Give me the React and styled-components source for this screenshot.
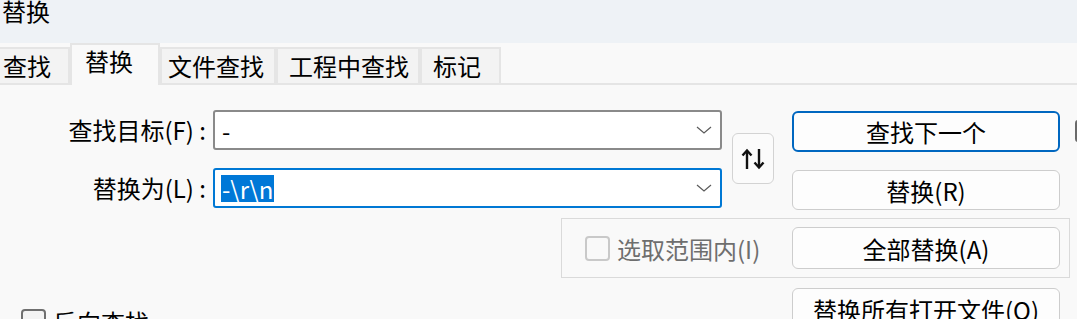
import React from 'react';
import styled, { createGlobalStyle } from 'styled-components';

const GlobalStyle = createGlobalStyle`
  html, body {
    margin: 0;
    padding: 0;
    background: #f9f9f9;
    overflow: hidden;
  }
  body {
    font-family: "Noto Sans CJK SC", "Noto Sans", sans-serif;
    font-size: 24px;
    color: #000;
  }
`;

const Window = styled.div`
  width: 1077px;
  height: 319px;
  overflow: hidden;
  background: #f9f9f9;
`;

const TitleBar = styled.div`
  height: 43px;
  background: #eef2f6;
  padding-left: 2px;
  line-height: 22px;
`;

const TabStrip = styled.div`
  height: 40px;
  display: flex;
  align-items: flex-end;
  border-bottom: 2px solid #e5e5e5;
`;

const Tab = styled.div`
  box-sizing: border-box;
  flex: none;
  width: ${p => p.$w}px;
  height: ${p => (p.$active ? 42 : 36)}px;
  margin-bottom: ${p => (p.$active ? -2 : 0)}px;
  padding-left: ${p => p.$pl}px;
  background: ${p => (p.$active ? '#f9f9f9' : '#f3f3f3')};
  border: 2px solid #e5e5e5;
  border-bottom: none;
  border-left-width: ${p => (p.$first ? 0 : 2)}px;
  line-height: ${p => (p.$active ? 32 : 34)}px;
  white-space: nowrap;
`;

const Panel = styled.div`
  padding-top: 25px;
`;

const TopRow = styled.div`
  display: flex;
  align-items: flex-start;
  & > * {
    flex: none;
  }
`;

const Fields = styled.div`
  display: grid;
  grid-template-columns: 213px 509px;
  grid-auto-rows: 40px;
  row-gap: 18px;
`;

const Label = styled.div`
  text-align: right;
  padding-right: 7px;
  line-height: 40px;
  white-space: nowrap;
`;

const Combo = styled.div`
  box-sizing: border-box;
  height: 40px;
  display: flex;
  align-items: center;
  padding: 0 8px 0 6px;
  background: #fff;
  border: 2px solid ${p => (p.$focused ? '#0078d4' : '#8a8a8a')};
  border-radius: 3px;
`;

const ComboText = styled.span`
  padding-left: 1px;
  line-height: 27px;
`;

const Selected = styled.span`
  background: #0078d7;
  color: #fff;
  line-height: 27px;
  padding: 0 1px;
`;

const Chevron = styled.svg`
  margin-left: auto;
  flex: none;
`;

const SwapButton = styled.div`
  box-sizing: border-box;
  width: 42px;
  height: 51px;
  margin: 23px 0 0 10px;
  display: flex;
  align-items: center;
  justify-content: center;
  background: #fbfbfb;
  border: 1px solid #d3d3d3;
  border-radius: 6px;
`;

const ButtonColumn = styled.div`
  display: flex;
  flex-direction: column;
  gap: 18px;
  margin: 1px 0 0 18px;
`;

const Button = styled.div`
  box-sizing: border-box;
  width: 268px;
  height: ${p => p.$h || 41}px;
  flex: none;
  background: #fdfdfd;
  border: ${p => (p.$default ? '2px solid #0067c0' : '1px solid #cdcdcd')};
  border-radius: 6px;
  display: flex;
  align-items: center;
  justify-content: center;
  white-space: nowrap;
`;

const EdgeBox = styled.div`
  box-sizing: border-box;
  width: 22px;
  height: 22px;
  margin: 10px 0 0 15px;
  border: 2px solid #6a6a6a;
  border-radius: 3px;
`;

const GroupBox = styled.div`
  box-sizing: border-box;
  width: 509px;
  height: 60px;
  margin: 8px 0 0 561px;
  padding: 0 9px 0 23px;
  display: flex;
  align-items: center;
  border: 1px solid #dadada;
`;

const Check = styled.label`
  display: flex;
  align-items: center;
  gap: 7px;
  color: ${p => (p.$disabled ? '#6e6e6e' : '#000')};
  white-space: nowrap;
  margin-top: ${p => p.$mt || 0}px;
`;

const Box = styled.span`
  box-sizing: border-box;
  width: 25px;
  height: 25px;
  flex: none;
  border: 2px solid ${p => (p.$disabled ? '#c9c9c9' : '#6f6f6f')};
  border-radius: 4px;
  background: ${p => (p.$disabled ? '#f9f9f9' : '#f3f3f3')};
`;

const Push = styled.div`
  margin-left: auto;
`;

const BottomRow = styled.div`
  display: flex;
  align-items: flex-start;
  margin-top: 10px;
  padding: 0 17px 0 21px;
`;

const ChevronIcon = () => (
  <Chevron width="16" height="8" viewBox="0 0 16 8">
    <polyline points="1,1 8,7 15,1" fill="none" stroke="#5a5a5a" strokeWidth="1.2" />
  </Chevron>
);

const SwapIcon = () => (
  <svg width="24" height="22" viewBox="0 0 24 22">
    <g fill="none" stroke="#111" strokeWidth="2.4">
      <line x1="6" y1="3" x2="6" y2="21" />
      <polyline points="1.5,7.5 6,2.5 10.5,7.5" />
      <line x1="18" y1="1" x2="18" y2="19" />
      <polyline points="13.5,14.5 18,19.5 22.5,14.5" />
    </g>
  </svg>
);

const tabs = [
  { label: '查找', w: 70, pl: 3, first: true },
  { label: '替换', w: 90, pl: 13, active: true },
  { label: '文件查找', w: 116, pl: 6 },
  { label: '工程中查找', w: 144, pl: 11 },
  { label: '标记', w: 81, pl: 11 },
];

export default function App() {
  return (
    <Window>
      <GlobalStyle />
      <TitleBar>替换</TitleBar>
      <TabStrip>
        {tabs.map(t => (
          <Tab key={t.label} $w={t.w} $pl={t.pl} $active={t.active} $first={t.first}>
            {t.label}
          </Tab>
        ))}
      </TabStrip>
      <Panel>
        <TopRow>
          <Fields>
            <Label>查找目标(F) :</Label>
            <Combo>
              <ComboText>-</ComboText>
              <ChevronIcon />
            </Combo>
            <Label>替换为(L) :</Label>
            <Combo $focused>
              <Selected>-\r\n</Selected>
              <ChevronIcon />
            </Combo>
          </Fields>
          <SwapButton>
            <SwapIcon />
          </SwapButton>
          <ButtonColumn>
            <Button $default>查找下一个</Button>
            <Button $h={40}>替换(R)</Button>
          </ButtonColumn>
          <EdgeBox />
        </TopRow>
        <GroupBox>
          <Check $disabled>
            <Box $disabled />
            选取范围内(I)
          </Check>
          <Push>
            <Button $h={42}>全部替换(A)</Button>
          </Push>
        </GroupBox>
        <BottomRow>
          <Check $mt={16}>
            <Box />
            反向查找
          </Check>
          <Push>
            <Button $h={42}>替换所有打开文件(O)</Button>
          </Push>
        </BottomRow>
      </Panel>
    </Window>
  );
}
